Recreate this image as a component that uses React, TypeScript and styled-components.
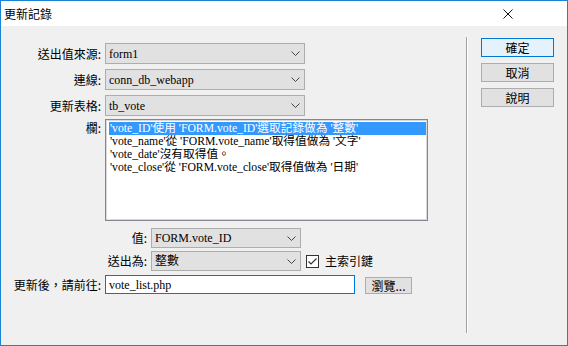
import React from "react";
import styled, { createGlobalStyle } from "styled-components";

const GlobalStyle = createGlobalStyle`
  html, body {
    margin: 0;
    padding: 0;
    background: #f0f0f0;
  }
  body {
    font-family: "Noto Sans CJK TC", sans-serif;
    font-size: 12px;
    color: #000;
  }
`;

const Window = styled.div`
  width: 568px;
  height: 346px;
  box-sizing: border-box;
  border: 1px solid #1883d7;
  display: flex;
  flex-direction: column;
  background: #f0f0f0;
`;

const TitleBar = styled.div`
  height: 25px;
  flex-shrink: 0;
  background: #fff;
  display: flex;
  align-items: center;
  justify-content: space-between;
  padding-left: 3px;
`;

const Title = styled.span`
  font-size: 12px;
  line-height: 1;
`;

const CloseIcon = styled.svg`
  width: 10px;
  height: 10px;
  margin-right: 54px;
`;

const Body = styled.div`
  flex: 1;
  display: flex;
`;

const MainPanel = styled.div`
  width: 465px;
  padding-top: 17px;
  display: flex;
  flex-direction: column;
`;

const Separator = styled.div`
  width: 0;
  margin-top: 11px;
  height: 296px;
  border-left: 1px solid #a0a0a0;
  border-right: 1px solid #fff;
`;

const ButtonColumn = styled.div`
  display: flex;
  flex-direction: column;
  gap: 6px;
  padding: 12px 0 0 13px;
`;

const DialogButton = styled.div<{ $default?: boolean }>`
  width: 73px;
  height: 19px;
  box-sizing: border-box;
  border: 1px solid ${(p) => (p.$default ? "#0078d7" : "#adadad")};
  background: ${(p) => (p.$default ? "#e5f1fb" : "#e1e1e1")};
  display: flex;
  align-items: center;
  justify-content: center;
  font-size: 12px;
  line-height: 1;
`;

const Row = styled.div<{ $top: number; $align?: string }>`
  display: flex;
  align-items: ${(p) => p.$align || "center"};
  gap: 4px;
  margin-top: ${(p) => p.$top}px;
`;

const Label = styled.div<{ $width: number; $offset?: number }>`
  width: ${(p) => p.$width}px;
  flex-shrink: 0;
  text-align: right;
  font-size: 12px;
  line-height: 1;
  padding-top: ${(p) => p.$offset || 0}px;
  white-space: nowrap;
`;

const Select = styled.div<{ $width: number; $height: number }>`
  width: ${(p) => p.$width}px;
  height: ${(p) => p.$height}px;
  box-sizing: border-box;
  border: 1px solid #adadad;
  background: #e1e1e1;
  display: flex;
  align-items: center;
  justify-content: space-between;
  padding: 0 4px 0 3px;
  font-family: "Liberation Serif", "Noto Sans CJK TC", serif;
  font-size: 12px;
  line-height: 1;
`;

const Chevron = styled.svg`
  width: 9px;
  height: 5px;
  flex-shrink: 0;
`;

const ListBox = styled.div`
  width: 323px;
  height: 102px;
  box-sizing: border-box;
  border: 1px solid #828790;
  box-shadow: inset 0 0 0 1px #d9d9d9;
  background: #fff;
  padding: 2px 1px 1px 3px;
  font-family: "Liberation Serif", "Noto Sans CJK TC", serif;
  font-size: 11.7px;
`;

const ListItem = styled.div<{ $selected?: boolean }>`
  height: 13px;
  line-height: 13px;
  padding-left: 1px;
  white-space: nowrap;
  background: ${(p) => (p.$selected ? "#3399ff" : "transparent")};
  color: ${(p) => (p.$selected ? "#fff" : "#000")};
`;

const CheckBox = styled.div`
  width: 13px;
  height: 13px;
  box-sizing: border-box;
  border: 1px solid #333;
  background: #fff;
  margin-left: 1px;
  display: flex;
  align-items: center;
  justify-content: center;
`;

const CheckLabel = styled.span`
  margin-left: 2px;
  font-size: 12px;
  line-height: 1;
`;

const TextInput = styled.div`
  width: 250px;
  height: 19px;
  box-sizing: border-box;
  border: 1px solid #0078d7;
  background: #fff;
  display: flex;
  align-items: center;
  padding-left: 3px;
  font-family: "Liberation Serif", serif;
  font-size: 12px;
  line-height: 1;
`;

const BrowseButton = styled.div`
  width: 47px;
  height: 17px;
  box-sizing: border-box;
  margin-left: 6px;
  margin-top: 2px;
  border: 1px solid #adadad;
  background: #e1e1e1;
  display: flex;
  align-items: center;
  justify-content: center;
  font-size: 12px;
  line-height: 1;
`;

const ChevronDown = () => (
  <Chevron viewBox="0 0 9 5">
    <polyline points="0.5,0.5 4.5,4.5 8.5,0.5" fill="none" stroke="#444" strokeWidth="1" />
  </Chevron>
);

const items = [
  "'vote_ID'使用 'FORM.vote_ID'選取記錄做為 '整數'",
  "'vote_name'從 'FORM.vote_name'取得值做為 '文字'",
  "'vote_date'沒有取得值。",
  "'vote_close'從 'FORM.vote_close'取得值做為 '日期'",
];

export default function App() {
  return (
    <>
      <GlobalStyle />
      <Window>
        <TitleBar>
          <Title>更新記錄</Title>
          <CloseIcon viewBox="0 0 10 10">
            <path d="M0.5 0.5 L9.5 9.5 M9.5 0.5 L0.5 9.5" stroke="#111" strokeWidth="1" />
          </CloseIcon>
        </TitleBar>
        <Body>
          <MainPanel>
            <Row $top={0}>
              <Label $width={100}>送出值來源:</Label>
              <Select $width={200} $height={21}>
                form1
                <ChevronDown />
              </Select>
            </Row>
            <Row $top={5}>
              <Label $width={100}>連線:</Label>
              <Select $width={200} $height={21}>
                conn_db_webapp
                <ChevronDown />
              </Select>
            </Row>
            <Row $top={5}>
              <Label $width={100}>更新表格:</Label>
              <Select $width={200} $height={21}>
                tb_vote
                <ChevronDown />
              </Select>
            </Row>
            <Row $top={3} $align="flex-start">
              <Label $width={100} $offset={3}>欄:</Label>
              <ListBox>
                {items.map((t, i) => (
                  <ListItem key={i} $selected={i === 0}>
                    {t}
                  </ListItem>
                ))}
              </ListBox>
            </Row>
            <Row $top={7}>
              <Label $width={146}>值:</Label>
              <Select $width={150} $height={20}>
                FORM.vote_ID
                <ChevronDown />
              </Select>
            </Row>
            <Row $top={3}>
              <Label $width={146}>送出為:</Label>
              <Select $width={150} $height={20}>
                整數
                <ChevronDown />
              </Select>
              <CheckBox>
                <svg width="9" height="7" viewBox="0 0 9 7">
                  <polyline points="0.5,3.5 3,6 8.5,0.5" fill="none" stroke="#333" strokeWidth="1.2" />
                </svg>
              </CheckBox>
              <CheckLabel>主索引鍵</CheckLabel>
            </Row>
            <Row $top={4}>
              <Label $width={100}>更新後，請前往:</Label>
              <TextInput>vote_list.php</TextInput>
              <BrowseButton>瀏覽...</BrowseButton>
            </Row>
          </MainPanel>
          <Separator />
          <ButtonColumn>
            <DialogButton $default>確定</DialogButton>
            <DialogButton>取消</DialogButton>
            <DialogButton>說明</DialogButton>
          </ButtonColumn>
        </Body>
      </Window>
    </>
  );
}
